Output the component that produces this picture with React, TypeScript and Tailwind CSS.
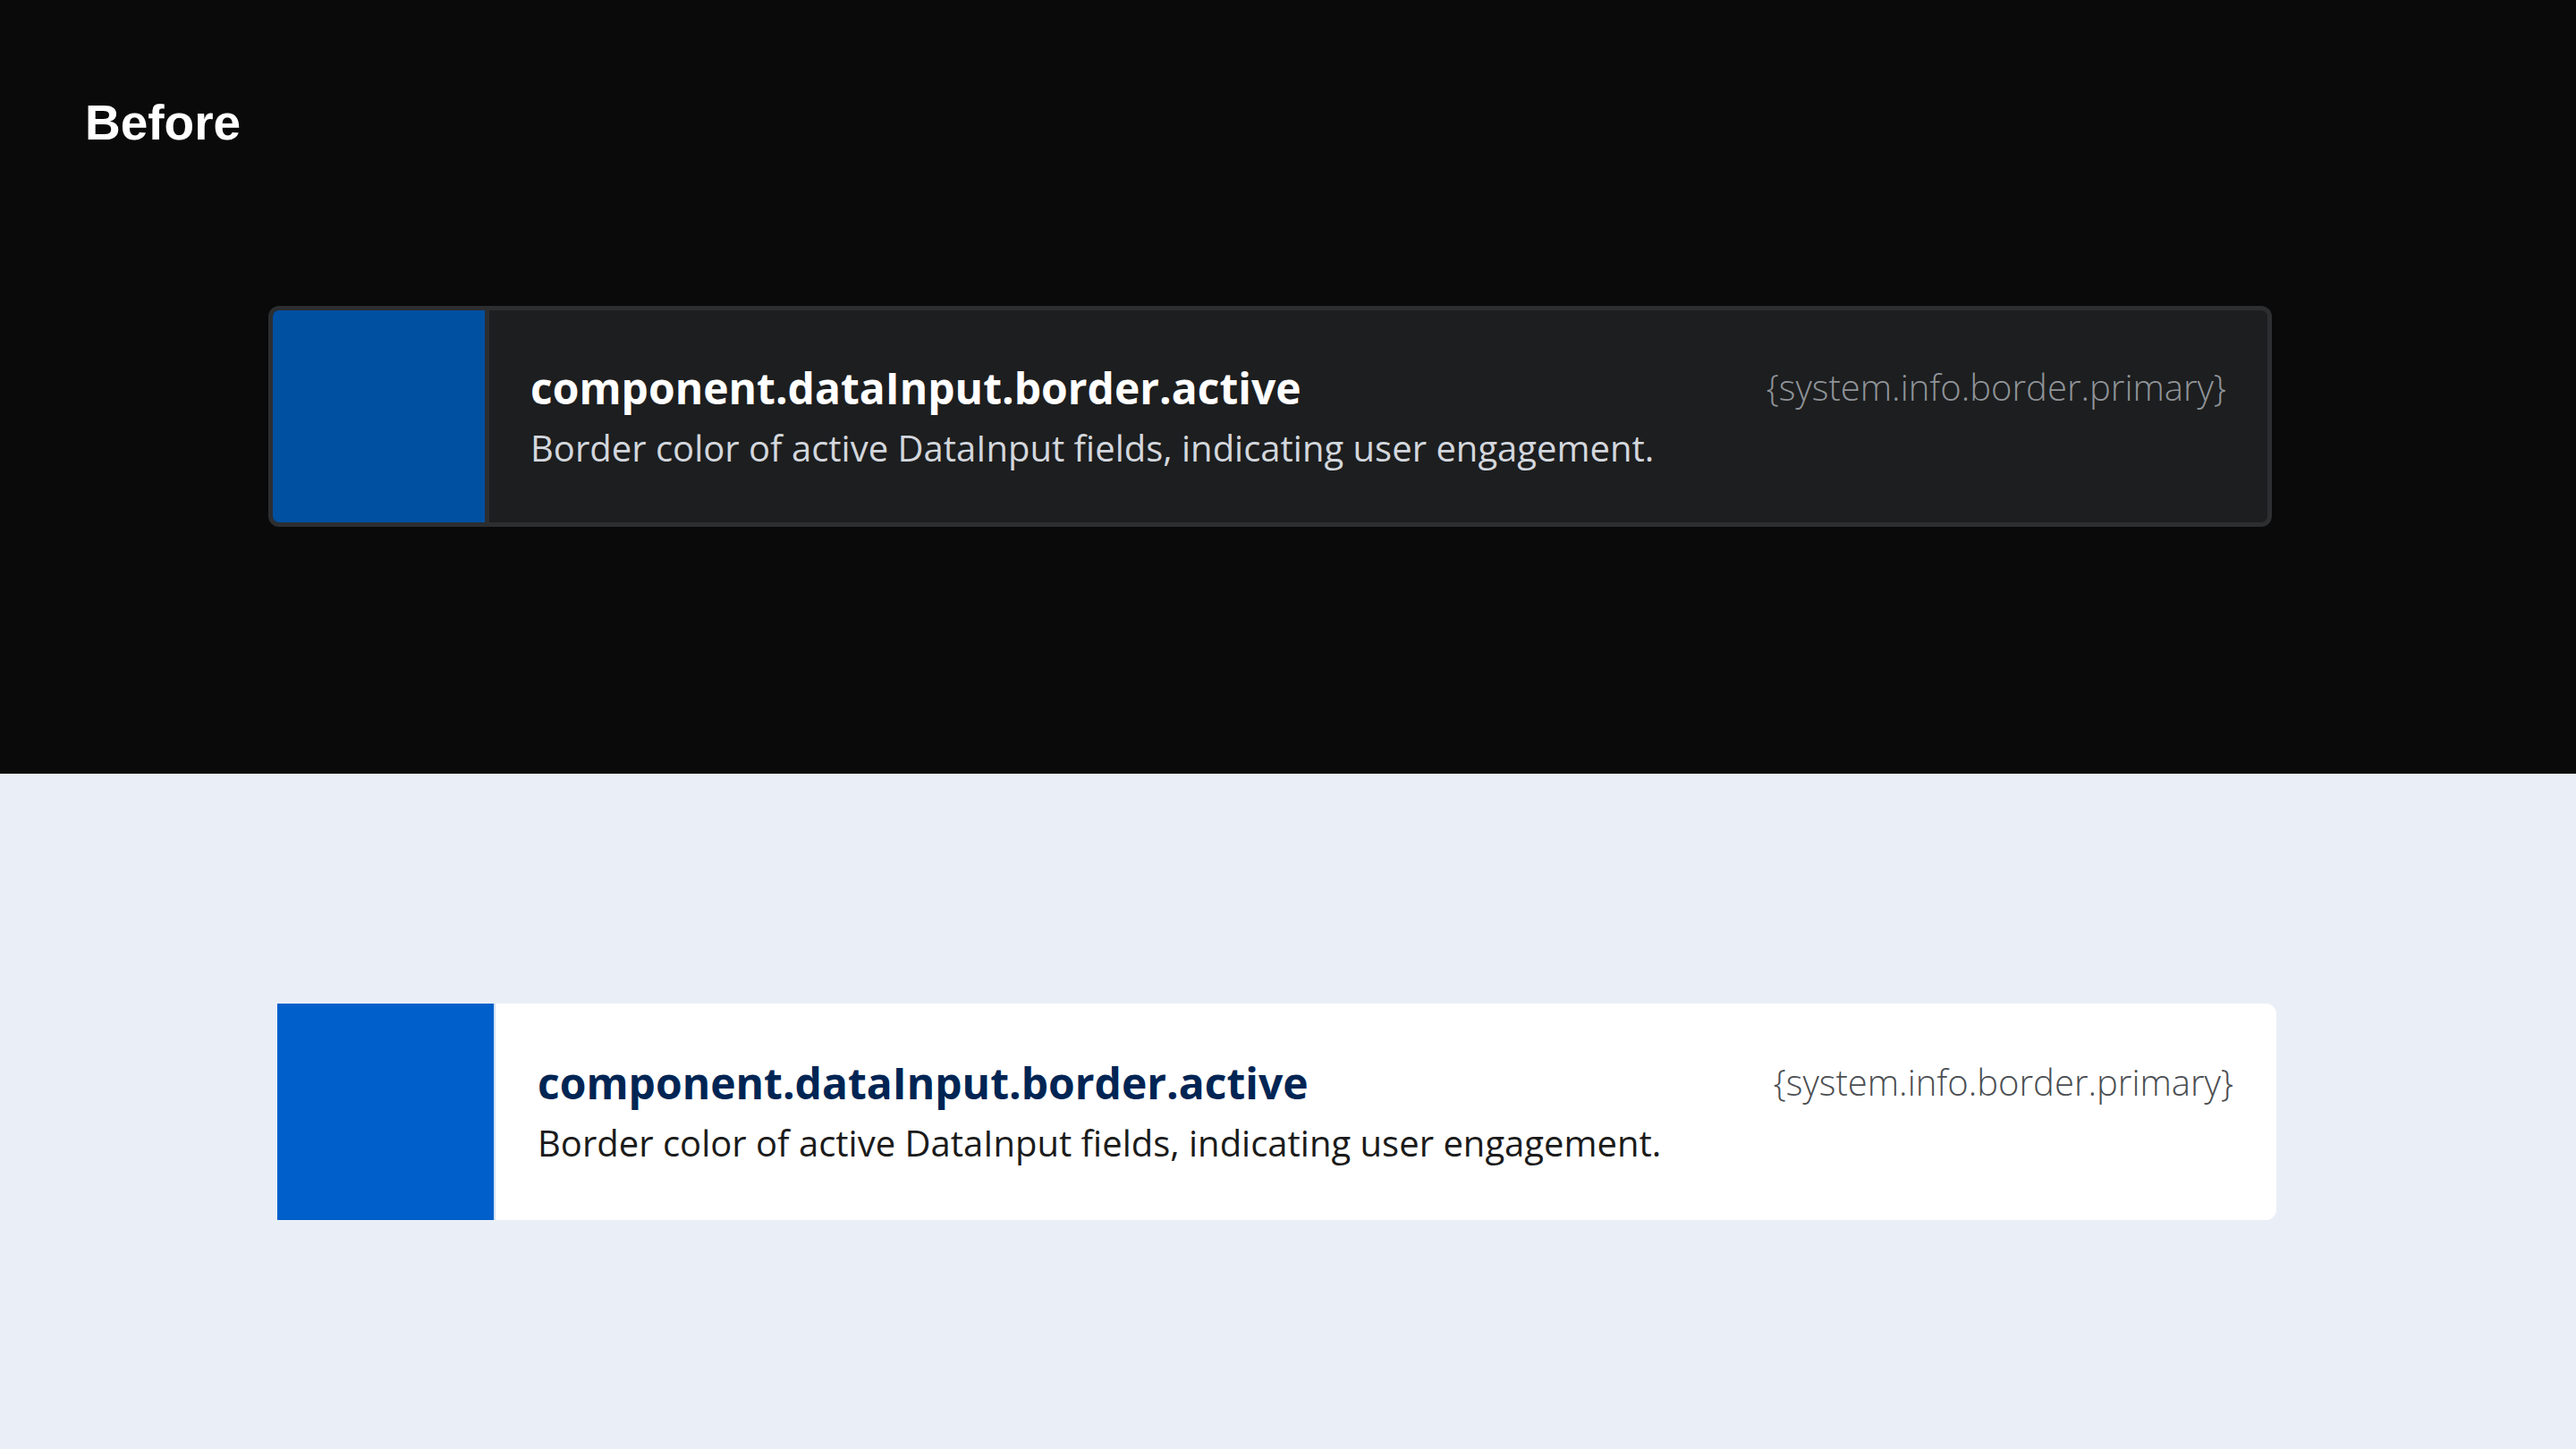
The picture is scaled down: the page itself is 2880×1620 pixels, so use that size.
import React from "react";

// 令牌卡片：左侧色块 + 名称/描述 + 右侧引用值
type Token = {
  name: string;
  description: string;
  reference: string;
};

const token: Token = {
  name: "component.dataInput.border.active",
  description: "Border color of active DataInput fields, indicating user engagement.",
  reference: "{system.info.border.primary}",
};

const font = "font-['Open_Sans','Noto_Sans',sans-serif]";

function DarkCard({ t }: { t: Token }) {
  return (
    <div className="ml-[300px] flex h-[247px] w-[2240px] overflow-hidden rounded-[12px] border-[5px] border-[#2c2e30] bg-[#1d1e1f]">
      <div className="h-full w-[237px] shrink-0 bg-[#0050a2]" />
      <div className="h-full w-[5px] shrink-0 bg-[#2c2e30]" />
      <div className="flex min-w-0 flex-1 items-start justify-between pl-[46px] pr-[46px]">
        <div className="flex flex-col pt-[59px]">
          <div className="text-[48px] font-bold leading-[56px] text-white">{t.name}</div>
          <div className="mt-[15px] text-[40px] leading-[48px] text-[#d3d7dd]">{t.description}</div>
        </div>
        <div className="pt-[62px] text-[40px] font-light leading-[48px] text-[#8f9499]">{t.reference}</div>
      </div>
    </div>
  );
}

function LightCard({ t }: { t: Token }) {
  return (
    <div className="ml-[310px] flex h-[242px] w-[2235px] overflow-hidden rounded-r-[12px] bg-white">
      <div className="h-full w-[242px] shrink-0 bg-[#005fcb]" />
      <div className="h-full w-[2px] shrink-0 bg-[#cfe0f5]" />
      <div className="flex min-w-0 flex-1 items-start justify-between pl-[47px] pr-[48px]">
        <div className="flex flex-col pt-[61px]">
          <div className="text-[48px] font-bold leading-[56px] text-[#002554]">{t.name}</div>
          <div className="mt-[15px] text-[40px] leading-[48px] text-[#1b1b1b]">{t.description}</div>
        </div>
        <div className="pt-[64px] text-[40px] font-light leading-[48px] text-[#4b4e52]">{t.reference}</div>
      </div>
    </div>
  );
}

export default function App() {
  return (
    <div className={`flex h-[1620px] w-[2880px] flex-col ${font}`}>
      {/* Before */}
      <section className="h-[865px] shrink-0 bg-[#0a0a0a]">
        <div className="pl-[95px] pt-[105px] font-['Liberation_Sans',sans-serif] text-[55px] font-bold leading-[64px] text-white">
          Before
        </div>
        <div className="mt-[173px]">
          <DarkCard t={token} />
        </div>
      </section>

      {/* After */}
      <section className="flex-1 bg-[#eaeff7] pt-[257px]">
        <LightCard t={token} />
      </section>
    </div>
  );
}
